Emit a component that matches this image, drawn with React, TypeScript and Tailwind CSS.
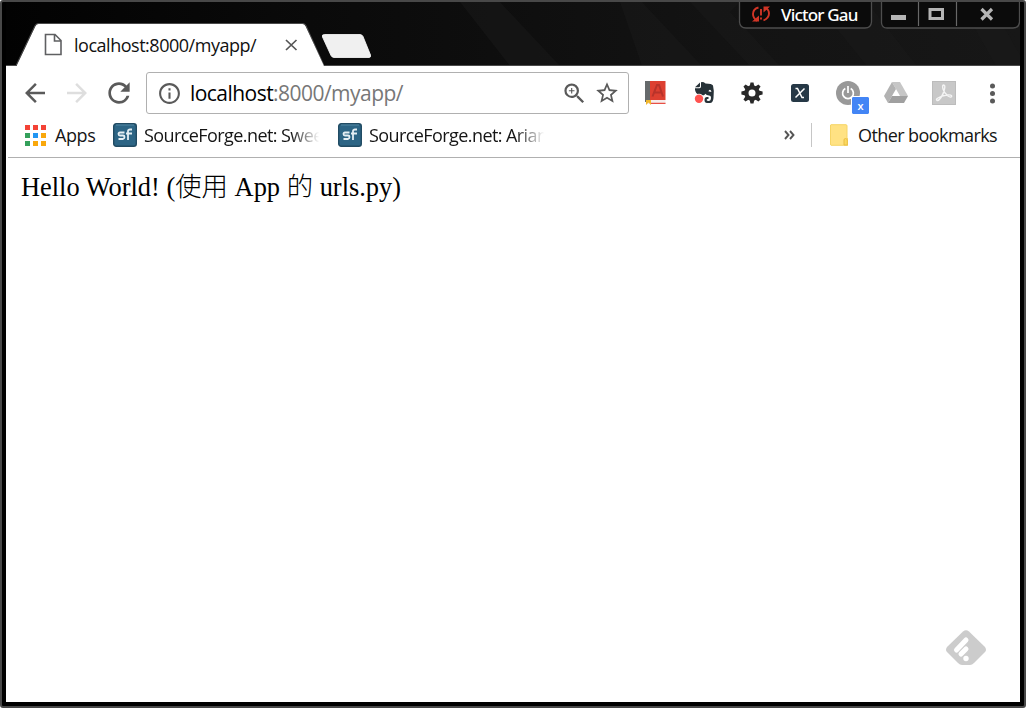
import React from "react";
import {
  MdArrowBack,
  MdArrowForward,
  MdRefresh,
  MdInfoOutline,
  MdZoomIn,
  MdStarBorder,
} from "react-icons/md";

const appColors = [
  "#f44336", "#f44336", "#f44336",
  "#34a05b", "#2196f3", "#f9a80c",
  "#34a05b", "#f9a80c", "#f9a80c",
];

function TitleBar() {
  return (
    <header className="flex h-[64px] shrink-0 overflow-hidden">
      <svg width="1014" height="64" viewBox="6 2 1014 64" className="shrink-0">
        <defs>
          <linearGradient id="bar" x1="0" x2="1">
            <stop offset="0" stopColor="#020202" />
            <stop offset=".3" stopColor="#0a0a0a" />
            <stop offset=".7" stopColor="#131313" />
            <stop offset="1" stopColor="#171717" />
          </linearGradient>
        </defs>
        <rect x="6" y="2" width="1014" height="64" fill="url(#bar)" />
        <path d="M460 2h40l60 64h-50zM620 2h22l60 64h-60zM690 2h50l-10 10 50 54h-30zM815 2h52l50 64h-50zM960 2h30l36 64h-30z" fill="#1a1a1a" opacity=".5" />
        <path d="M6 65.5H16L35 25.5Q36 23.5 38 23.5H303Q305 23.5 306 25.5L324 65.5H1020" fill="none" stroke="#4a4a4a" />
        <path d="M6 66H16.500L35.500 26Q36.500 24 38.500 24H302.500Q304.500 24 305.500 26L324 66Z" fill="#fff" />
        <path d="M324.500 34.500H360Q362 34.500 363 36.500L370.500 55Q371 57.500 369 57.500H334Q332 57.500 331 55.500L322.500 37Q321.500 34.500 324.500 34.500Z" fill="#f0f0f0" stroke="#fff" strokeWidth=".8" />
        <path d="M739.500 2V22Q740 28 746 28H865Q871 28 871.500 22V2" fill="#0b0b0b" stroke="#4d4d4d" strokeWidth="1.300" />
        <path d="M881.500 2V23Q882 28 887 28H1013Q1019 28 1019.500 22V2" fill="#0b0b0b" stroke="#4d4d4d" strokeWidth="1.300" />
        <path d="M918.500 2V26M956.500 2V26" stroke="#686868" strokeWidth="1.200" />
        <rect x="891" y="15" width="15" height="5" fill="#b5b5b5" />
        <rect x="930" y="9.500" width="12.500" height="9" fill="none" stroke="#b5b5b5" strokeWidth="3" />
        <path d="M981.500 9L992 19.500M992 9L981.500 19.500" stroke="#b5b5b5" strokeWidth="3.200" />
        <g fill="none" stroke="#d03526" strokeWidth="1.900">
          <path d="M758.500 7.500Q753 9 753 14Q753 18 757 21M763.500 20.500Q769 18 769 13.500Q769 10 765.500 7.500" />
          <path d="M761 9V15.500M761 17.500V19.500" />
        </g>
        <path d="M752 21.500H759V15.500ZM770 6.500H763.500V12.500Z" fill="#d03526" />
        <path d="M45.500 34.500H55L61 40.500V54.500H45.500ZM54.500 35V41H61" fill="none" stroke="#5f6062" strokeWidth="1.600" />
        <path d="M286 40L296.500 50M296.500 40L286 50" stroke="#555" strokeWidth="1.700" />
      </svg>
      <div className="-ml-[1014px] flex w-[1014px] shrink-0">
        <span className="ml-[68px] mt-[30px] h-[26px] w-[200px] text-[18px] leading-[26px] tracking-[-0.48px] text-[#111]">
          localhost:8000/myapp/
        </span>
        <span className="ml-[507px] h-[26px] whitespace-nowrap font-['Noto_Sans'] text-[17px] font-medium leading-[26px] tracking-[-0.8px] text-white">
          Victor Gau
        </span>
      </div>
    </header>
  );
}

function Slot({ children }: { children: React.ReactNode }) {
  return <div className="flex h-[54px] w-12 shrink-0 items-center justify-center">{children}</div>;
}

function Extensions() {
  return (
    <div className="ml-[3px] flex">
      <Slot>
        <svg width="22" height="26" viewBox="0 0 22 26">
          <path d="M0 1H5V22H0Z" fill="#666a6c" />
          <path d="M5 1H20.500V20H5Z" fill="#dd4031" />
          <path d="M2 20H20.500V24H2Z" fill="#f6eceb" />
          <path d="M6 22.800H20.500V24H6Z" fill="#e85045" />
          <path d="M1 20H6V25L3.500 22.500 1 25Z" fill="#f1b72c" />
          <path d="M7.500 16.500L12 5H14L18 16.500M9 12.500H16.500" fill="none" stroke="#b8332a" strokeWidth="2" />
        </svg>
      </Slot>
      <Slot>
        <svg width="22" height="24" viewBox="0 0 22 24">
          <path d="M2 6.200L7 1.500V5Q7 6.200 5.700 6.200Z" fill="#273238" />
          <path
            d="M8 1.200Q10.500 .700 12.500 2.500Q19 2.500 20 4.500Q21.500 10 20.500 17Q20 22 17 22H14Q11.500 22 11.500 19Q11.500 16.200 14 16H15.500V18H14.500Q13.500 18.200 13.700 19.200Q14 20 15.500 20Q18 20 18 16.500Q18 14.500 16 14.500Q13.500 14.500 12.300 12.800Q11.500 15 9 14.500Q3.500 14 2.500 10.500Q1.700 8.500 2 7.200H6.500Q8 7 8 5.500Z"
            fill="#273238"
          />
          <path d="M15.500 10.500Q15.700 8.700 17 8.800Q18.300 9 18.400 11Q17 10.300 15.500 10.500Z" fill="#fff" />
          <circle cx="6" cy="17.700" r="5" fill="#fff" />
          <circle cx="6" cy="17.700" r="4.200" fill="#ff5350" />
        </svg>
      </Slot>
      <Slot>
        <svg width="22" height="22" viewBox="-11 -11 22 22">
          <g fill="#292929">
            {[0, 45, 90, 135, 180, 225, 270, 315].map((a) => (
              <path key={a} d="M-2.400-6.500L-1.500-10.600H1.500L2.400-6.500Z" transform={`rotate(${a})`} />
            ))}
          </g>
          <circle r="5.600" fill="none" stroke="#292929" strokeWidth="4.200" />
        </svg>
      </Slot>
      <Slot>
        <svg width="20" height="20" viewBox="0 0 20 20">
          <rect x="1" y="1" width="18" height="18" rx="2.500" fill="#263846" />
          <path d="M5.500 5.500H7.500L12 14.500H14M14.500 5.500L5.500 14.500" fill="none" stroke="#fff" strokeWidth="1.500" />
        </svg>
      </Slot>
      <Slot>
        <div className="relative h-6 w-6">
          <svg width="24" height="24" viewBox="0 0 24 24">
            <circle cx="12" cy="12" r="12" fill="#999" />
            <path d="M9.300 7.500A5.400 5.400 0 1 0 14.700 7.500M12 5V12" fill="none" stroke="#fff" strokeWidth="1.700" />
          </svg>
          <span className="absolute left-[16px] top-[16px] flex h-[17px] w-[17px] items-end justify-center rounded-[1px] bg-[#4385f5] pb-px text-[11px] font-semibold leading-[15px] text-white outline outline-1 outline-white">
            x
          </span>
        </div>
      </Slot>
      <Slot>
        <svg width="24" height="22" viewBox="0 0 24 22">
          <path d="M8 0H16L24 14H16Z" fill="#c6c6c6" />
          <path d="M8 0L12 7 4 21 0 14Z" fill="#b2b2b2" />
          <path d="M8 14H24L20 21H4Z" fill="#a0a0a0" />
        </svg>
      </Slot>
      <Slot>
        <svg width="24" height="24" viewBox="0 0 24 24">
          <rect x=".500" y=".500" width="23" height="23" fill="#c8c8c8" stroke="#bcbcbc" />
          <path d="M11.500 4Q13.500 4 12.500 8Q11.500 13 9 16.500Q6.500 20 5 19.500Q3.500 18.500 6 17Q10 14.500 15 14Q20 13.500 19.700 15.300Q19 17 16 15Q12 12 11 8Q10 4.500 11.500 4Z" fill="none" stroke="#f4f4f4" strokeWidth="1.400" />
        </svg>
      </Slot>
      <Slot>
        <svg width="6" height="22" viewBox="0 0 6 22" fill="#5a5a5a">
          <circle cx="3.500" cy="4" r="2.500" />
          <circle cx="3.500" cy="11.500" r="2.500" />
          <circle cx="3.500" cy="19" r="2.500" />
        </svg>
      </Slot>
    </div>
  );
}

function Toolbar() {
  return (
    <div className="flex h-[51px] shrink-0 items-start">
      <MdArrowBack size={30} color="#5a5a5a" className="ml-[14px] mt-[12px] shrink-0" />
      <MdArrowForward size={30} color="#dedede" className="ml-[12px] mt-[12px] shrink-0" />
      <MdRefresh size={32} color="#5a5a5a" className="ml-[11px] mt-[11px] shrink-0" />
      <div className="ml-[11px] mt-[6px] flex h-[42px] w-[483px] shrink-0 items-center rounded-[3px] border border-[#b0b0b0]">
        <MdInfoOutline size={25} color="#5a5a5a" className="ml-[10px] shrink-0" />
        <span className="ml-[8px] w-[364px] text-[21px] leading-[28px] tracking-[-0.54px] text-[#777]">
          <span className="text-black">localhost</span>:8000/myapp/
        </span>
        <MdZoomIn size={27} color="#5a5a5a" className="ml-[7px] shrink-0" />
        <MdStarBorder size={26} color="#5a5a5a" className="ml-[6px] shrink-0" />
      </div>
      <Extensions />
    </div>
  );
}

function Bookmark({ label }: { label: string }) {
  return (
    <div className="flex w-[225px] items-center">
      <svg width="24" height="24" viewBox="0 0 24 24" className="mt-px shrink-0">
        <rect x=".700" y=".700" width="22.600" height="22.600" rx="2.500" fill="#2d6585" stroke="#214b63" strokeWidth="1.400" />
        <path d="M3 2H21" stroke="#5389a5" />
        <path d="M11.500 9.500H7Q5.500 9.500 5.500 11T7 12.500H10Q11.500 12.500 11.500 14T10 16H5.500M15 17V8Q15 6.500 17 6.500H19M13 10.500H19" fill="none" stroke="#e5eff4" strokeWidth="1.800" />
      </svg>
      <span className="ml-[7px] w-[177px] whitespace-nowrap text-[18px] leading-[26px] tracking-[-0.58px] [mask-image:linear-gradient(to_right,black_83%,transparent_99%)]">
        {label}
      </span>
    </div>
  );
}

function BookmarksBar() {
  return (
    <div className="ml-[2px] flex h-[41px] shrink-0 items-center border-b border-[#b0b0b0] pb-[5px]">
      <div className="ml-[17px] mt-px grid grid-cols-3 gap-x-[3px] gap-y-[3px]">
        {appColors.map((color, i) => (
          <span key={i} className="h-[5px] w-[5px]" style={{ backgroundColor: color }} />
        ))}
      </div>
      <span className="ml-[9px] w-[58px] text-[18px] leading-[26px] tracking-[-0.4px]">Apps</span>
      <Bookmark label="SourceForge.net: Swee" />
      <Bookmark label="SourceForge.net: Arian" />
      <svg width="12" height="12" viewBox="0 0 12 12" className="ml-[221px] mt-px shrink-0">
        <path d="M1 2L4.500 6L1 10M6 2L9.500 6L6 10" fill="none" stroke="#555" strokeWidth="1.900" />
      </svg>
      <span className="ml-[15px] mt-px h-6 w-px shrink-0 bg-[#c6c6c6]" />
      <svg width="18" height="22" viewBox="0 0 18 22" className="ml-[18px] mt-px shrink-0">
        <path d="M1 .700H16Q17 .700 17 2V14.500H18V21.300H1Q.500 21.300 .500 20V1Z" fill="#ffe283" stroke="#f6d566" />
        <path d="M14 21V16Q14 14.500 15.500 14.500T17.300 16V21Z" fill="#fbd95f" stroke="#e9bd45" />
      </svg>
      <span className="ml-[10px] whitespace-nowrap text-[18px] leading-[26px] tracking-[-0.58px]">
        Other bookmarks
      </span>
    </div>
  );
}

export default function App() {
  return (
    <div className="flex h-[708px] w-[1026px] flex-col overflow-hidden rounded-[3px] border-2 border-[#484848] bg-black px-[4px] pb-[4px] font-['Open_Sans',sans-serif] text-[#151515]">
      <TitleBar />
      <div className="flex flex-1 flex-col bg-white">
        <Toolbar />
        <BookmarksBar />
        <main className="flex flex-1 flex-col justify-between pl-[15px]">
          <p className="mt-[12px] whitespace-nowrap font-['Liberation_Serif','Noto_Sans_CJK_TC',serif] text-[26.4px] leading-[34px] text-black">
            Hello World! (<span className="font-light">使用</span> App <span className="font-light">的</span> urls.py)
          </p>
          <svg width="40" height="36" viewBox="0 0 40 36" className="mb-[36px] mr-[34px] self-end">
            <path d="M17 1.500Q20-1 23 1.500L39 17Q41 20 39 22L28 33Q26 35 24 35H16Q14 35 12 33L1 22Q-1 20 1 17Z" fill="#ccc" />
            <path d="M20 10L10.500 20M20 19L15 24" stroke="#fff" strokeWidth="5" strokeLinecap="round" />
            <circle cx="20" cy="28.500" r="2.700" fill="#fff" />
          </svg>
        </main>
      </div>
    </div>
  );
}
